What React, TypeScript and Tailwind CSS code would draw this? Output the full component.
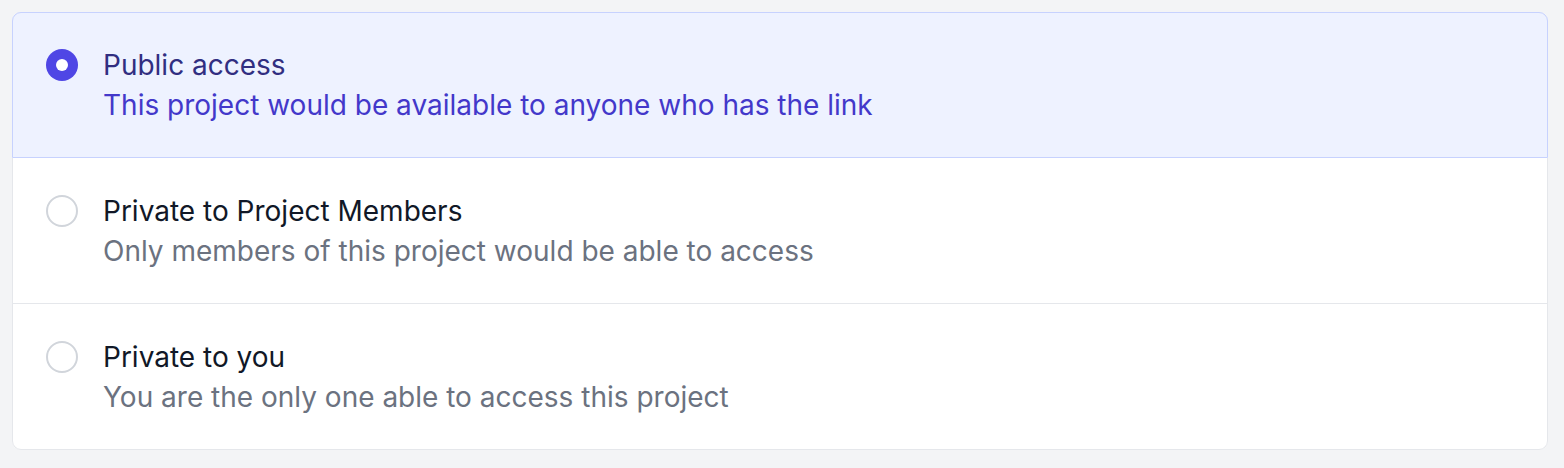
import { useState } from 'react'

const OPTIONS = [
  {
    id: 'public',
    title: 'Public access',
    description: 'This project would be available to anyone who has the link',
  },
  {
    id: 'members',
    title: 'Private to Project Members',
    description: 'Only members of this project would be able to access',
  },
  {
    id: 'private',
    title: 'Private to you',
    description: 'You are the only one able to access this project',
  },
]

export default function App() {
  const [selected, setSelected] = useState('public')

  return (
    <div className="min-h-[468px] bg-[#f3f4f6] pt-[12px] pl-[12px] pr-[16px] pb-[18px] font-['Inter',sans-serif]">
      <fieldset className="rounded-[9px] border border-[#e5e7eb] bg-white">
        {OPTIONS.map((option, index) => {
          const checked = selected === option.id
          const corners =
            index === 0 ? 'rounded-t-[9px]' : index === OPTIONS.length - 1 ? 'rounded-b-[9px]' : ''
          return (
            <label
              key={option.id}
              className={`relative flex h-[146px] cursor-pointer items-center gap-[25px] pl-[33px] pr-6 ${corners} ${
                index > 0 ? 'border-t border-[#e5e7eb]' : ''
              } ${
                checked
                  ? 'z-10 -m-px bg-[#eef2ff] pl-[34px] outline outline-1 -outline-offset-1 outline-[#c7d2fe]'
                  : ''
              }`}
            >
              <input
                type="radio"
                name="privacy"
                checked={checked}
                onChange={() => setSelected(option.id)}
                className="sr-only"
              />
              <span
                className={`-mt-[40px] flex h-[32px] w-[32px] shrink-0 items-center justify-center rounded-full ${
                  checked ? 'bg-[#4f46e5]' : 'border-2 border-[#d1d5db] bg-white'
                }`}
              >
                {checked && <span className="h-[12px] w-[12px] rounded-full bg-white" />}
              </span>
              <span className="flex flex-col">
                <span
                  className={`text-[28px] leading-[40px] font-normal ${
                    checked ? 'text-[#312e81]' : 'text-[#111827]'
                  }`}
                >
                  {option.title}
                </span>
                <span
                  className={`text-[28px] leading-[40px] ${checked ? 'text-[#4338ca]' : 'text-[#6b7280]'}`}
                >
                  {option.description}
                </span>
              </span>
            </label>
          )
        })}
      </fieldset>
    </div>
  )
}
